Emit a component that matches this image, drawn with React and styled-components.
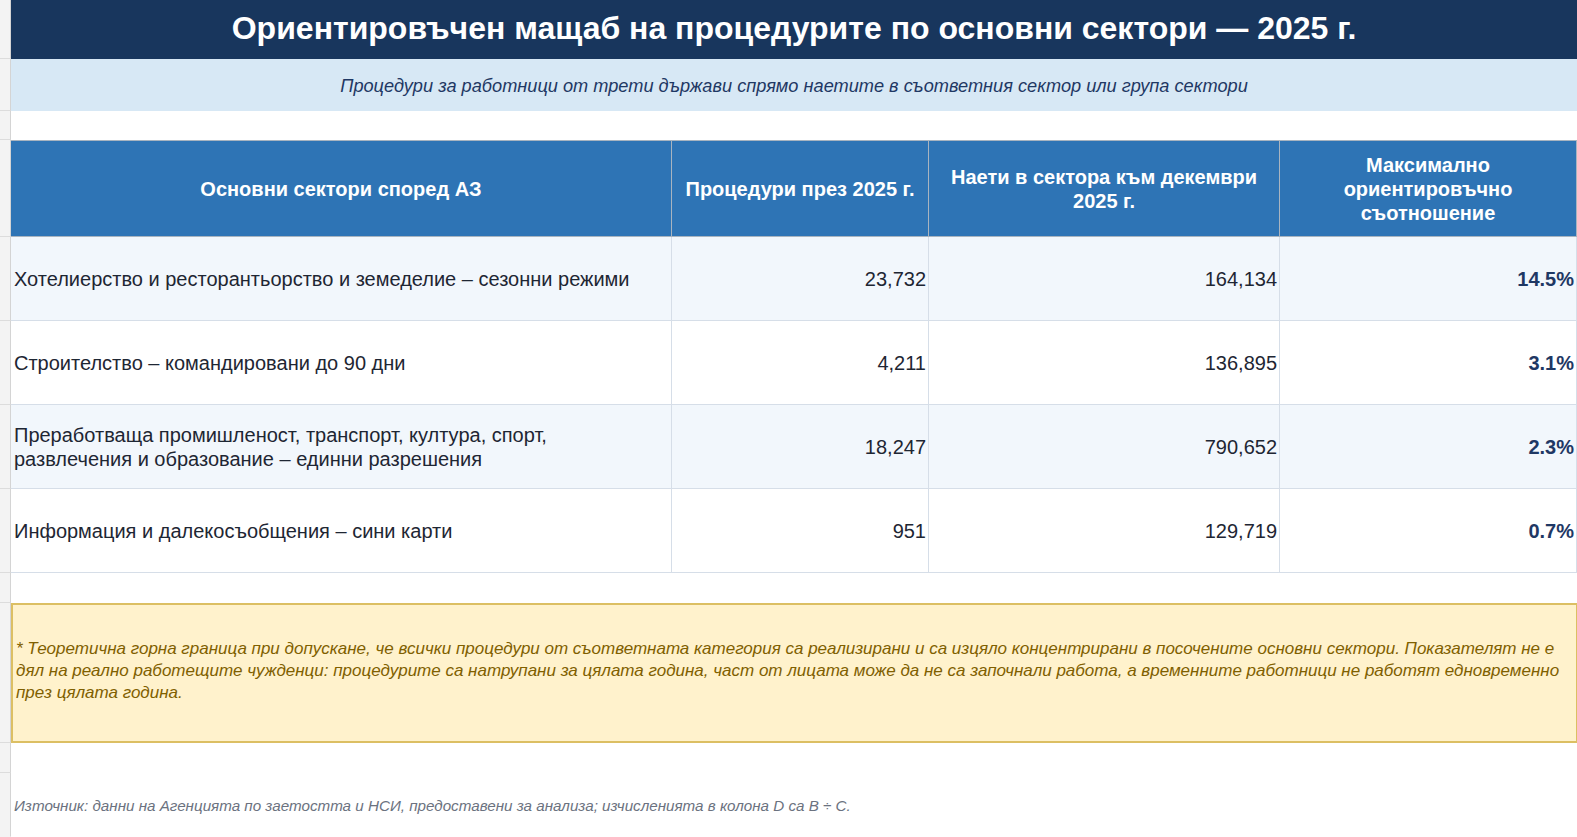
import React from "react";
import styled, { createGlobalStyle } from "styled-components";

const Global = createGlobalStyle`
  html, body { margin: 0; padding: 0; background: #ffffff; }
  body { font-family: "Liberation Sans", Arial, Helvetica, sans-serif; }
  * { box-sizing: border-box; }
`;

const Sheet = styled.div`
  width: 1577px;
  height: 837px;
  overflow: hidden;
  display: flex;
  flex-direction: column;
  background: #ffffff;
`;

const SheetRow = styled.div`
  display: grid;
  grid-template-columns: 11px 1fr;
  height: ${(p) => p.$h}px;
  flex: 0 0 auto;
`;

const Gutter = styled.div`
  background: #f3f3f3;
  border-right: 1px solid #d4d4d4;
  border-bottom: 1px solid ${(p) => (p.$last ? "transparent" : "#dcdcdc")};
`;

const TitleCell = styled.div`
  background: #18365d;
  color: #ffffff;
  font-weight: 700;
  font-size: 32px;
  display: flex;
  align-items: center;
  justify-content: center;
  padding-bottom: 3px;
`;

const SubtitleCell = styled.div`
  background: #d7e8f5;
  color: #1f3864;
  font-style: italic;
  font-size: 18.2px;
  display: flex;
  align-items: center;
  justify-content: center;
  padding-top: 2px;
`;

const Blank = styled.div`
  background: #ffffff;
`;

const TableLine = styled.div`
  display: grid;
  grid-template-columns: 661px 257px 351px 1fr;
  background: ${(p) => (p.$head ? "#2e74b5" : p.$alt ? "#f2f7fc" : "#ffffff")};
  border-top: ${(p) => (p.$head ? "1px solid #a8b4c0" : "none")};
`;

const HeadCell = styled.div`
  color: #ffffff;
  font-weight: 700;
  font-size: 20px;
  line-height: 24px;
  text-align: center;
  display: flex;
  align-items: center;
  justify-content: center;
  padding: 0 10px;
  border-right: 1px solid #a8b4c0;
  border-bottom: 1px solid #a8b4c0;
`;

const BodyCell = styled.div`
  color: #1e2633;
  font-size: 20px;
  line-height: 24px;
  display: flex;
  align-items: center;
  justify-content: ${(p) => (p.$num ? "flex-end" : "flex-start")};
  text-align: ${(p) => (p.$num ? "right" : "left")};
  padding: ${(p) => (p.$num ? "0 2px 0 8px" : "0 8px 0 3px")};
  border-right: 1px solid #d6dee8;
  border-bottom: 1px solid #d6dee8;
  font-weight: ${(p) => (p.$strong ? 700 : 400)};
  ${(p) => p.$strong && "color: #1f3864;"}
`;

const NoteBox = styled.div`
  background: #fff2cc;
  border: 2px solid #dcbf63;
  border-right-width: 1px;
  color: #7f6000;
  font-style: italic;
  font-size: 17px;
  line-height: 22px;
  display: flex;
  align-items: center;
  padding: 0 10px 4px 3px;
`;

const SourceCell = styled.div`
  color: #6b7280;
  font-style: italic;
  font-size: 15.2px;
  display: flex;
  align-items: center;
  padding: 0 0 0 3px;
`;

const rows = [
  {
    name: "Хотелиерство и ресторантьорство и земеделие – сезонни режими",
    proc: "23,732",
    emp: "164,134",
    ratio: "14.5%",
  },
  {
    name: "Строителство – командировани до 90 дни",
    proc: "4,211",
    emp: "136,895",
    ratio: "3.1%",
  },
  {
    name: (
      <>
        Преработваща промишленост, транспорт, култура, спорт,
        <br />
        развлечения и образование – единни разрешения
      </>
    ),
    proc: "18,247",
    emp: "790,652",
    ratio: "2.3%",
  },
  {
    name: "Информация и далекосъобщения – сини карти",
    proc: "951",
    emp: "129,719",
    ratio: "0.7%",
  },
];

export default function App() {
  return (
    <>
      <Global />
      <Sheet>
        <SheetRow $h={59}>
          <Gutter />
          <TitleCell>
            Ориентировъчен мащаб на процедурите по основни сектори — 2025 г.
          </TitleCell>
        </SheetRow>
        <SheetRow $h={52}>
          <Gutter />
          <SubtitleCell>
            Процедури за работници от трети държави спрямо наетите в съответния
            сектор или група сектори
          </SubtitleCell>
        </SheetRow>
        <SheetRow $h={29}>
          <Gutter />
          <Blank />
        </SheetRow>
        <SheetRow $h={97}>
          <Gutter />
          <TableLine $head>
            <HeadCell>Основни сектори според АЗ</HeadCell>
            <HeadCell>Процедури през 2025 г.</HeadCell>
            <HeadCell>Наети в сектора към декември 2025 г.</HeadCell>
            <HeadCell>Максимално ориентировъчно съотношение</HeadCell>
          </TableLine>
        </SheetRow>
        {rows.map((r, i) => (
          <SheetRow $h={84} key={i}>
            <Gutter />
            <TableLine $alt={i % 2 === 0}>
              <BodyCell>{r.name}</BodyCell>
              <BodyCell $num>{r.proc}</BodyCell>
              <BodyCell $num>{r.emp}</BodyCell>
              <BodyCell $num $strong>
                {r.ratio}
              </BodyCell>
            </TableLine>
          </SheetRow>
        ))}
        <SheetRow $h={30}>
          <Gutter />
          <Blank />
        </SheetRow>
        <SheetRow $h={140}>
          <Gutter />
          <NoteBox>
            * Теоретична горна граница при допускане, че всички процедури от
            съответната категория са реализирани и са изцяло концентрирани в
            посочените основни сектори. Показателят не е дял на реално
            работещите чужденци: процедурите са натрупани за цялата година, част
            от лицата може да не са започнали работа, а временните работници не
            работят едновременно през цялата година.
          </NoteBox>
        </SheetRow>
        <SheetRow $h={30}>
          <Gutter />
          <Blank />
        </SheetRow>
        <SheetRow $h={64}>
          <Gutter $last />
          <SourceCell>
            Източник: данни на Агенцията по заетостта и НСИ, предоставени за
            анализа; изчисленията в колона D са B ÷ C.
          </SourceCell>
        </SheetRow>
      </Sheet>
    </>
  );
}
